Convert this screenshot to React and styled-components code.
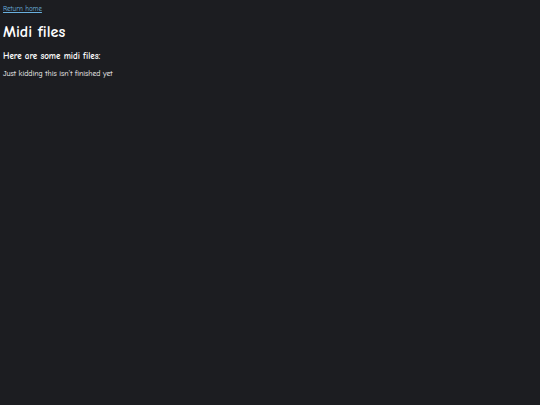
import React from "react";
import styled, { createGlobalStyle } from "styled-components";

const GlobalStyle = createGlobalStyle`
  html, body {
    margin: 0;
    background: #1c1d21;
    color: #ffffff;
    font-family: "Comic Sans MS", "Comic Neue", cursive;
  }
`;

const Page = styled.div`
  min-height: 405px;
  padding: 4px 3px;
  box-sizing: border-box;
  display: flex;
  flex-direction: column;
  align-items: flex-start;
`;

const HomeLink = styled.a`
  display: block;
  font-size: 7px;
  line-height: 10px;
  color: #6ab0de;
  text-decoration: underline;
`;

const Title = styled.h1`
  font-size: 16px;
  line-height: 20px;
  margin: 8px 0 0;
  font-weight: bold;
`;

const Subtitle = styled.h2`
  font-size: 9px;
  line-height: 12px;
  margin: 8px 0 0;
`;

const Note = styled.p`
  font-size: 7.8px;
  line-height: 10px;
  margin: 7px 0 0;
`;

export default function App() {
  return (
    <>
      <GlobalStyle />
      <Page>
        <HomeLink href="#">Return home</HomeLink>
        <Title>Midi files</Title>
        <Subtitle>Here are some midi files:</Subtitle>
        <Note>Just kidding this isn't finished yet</Note>
      </Page>
    </>
  );
}
